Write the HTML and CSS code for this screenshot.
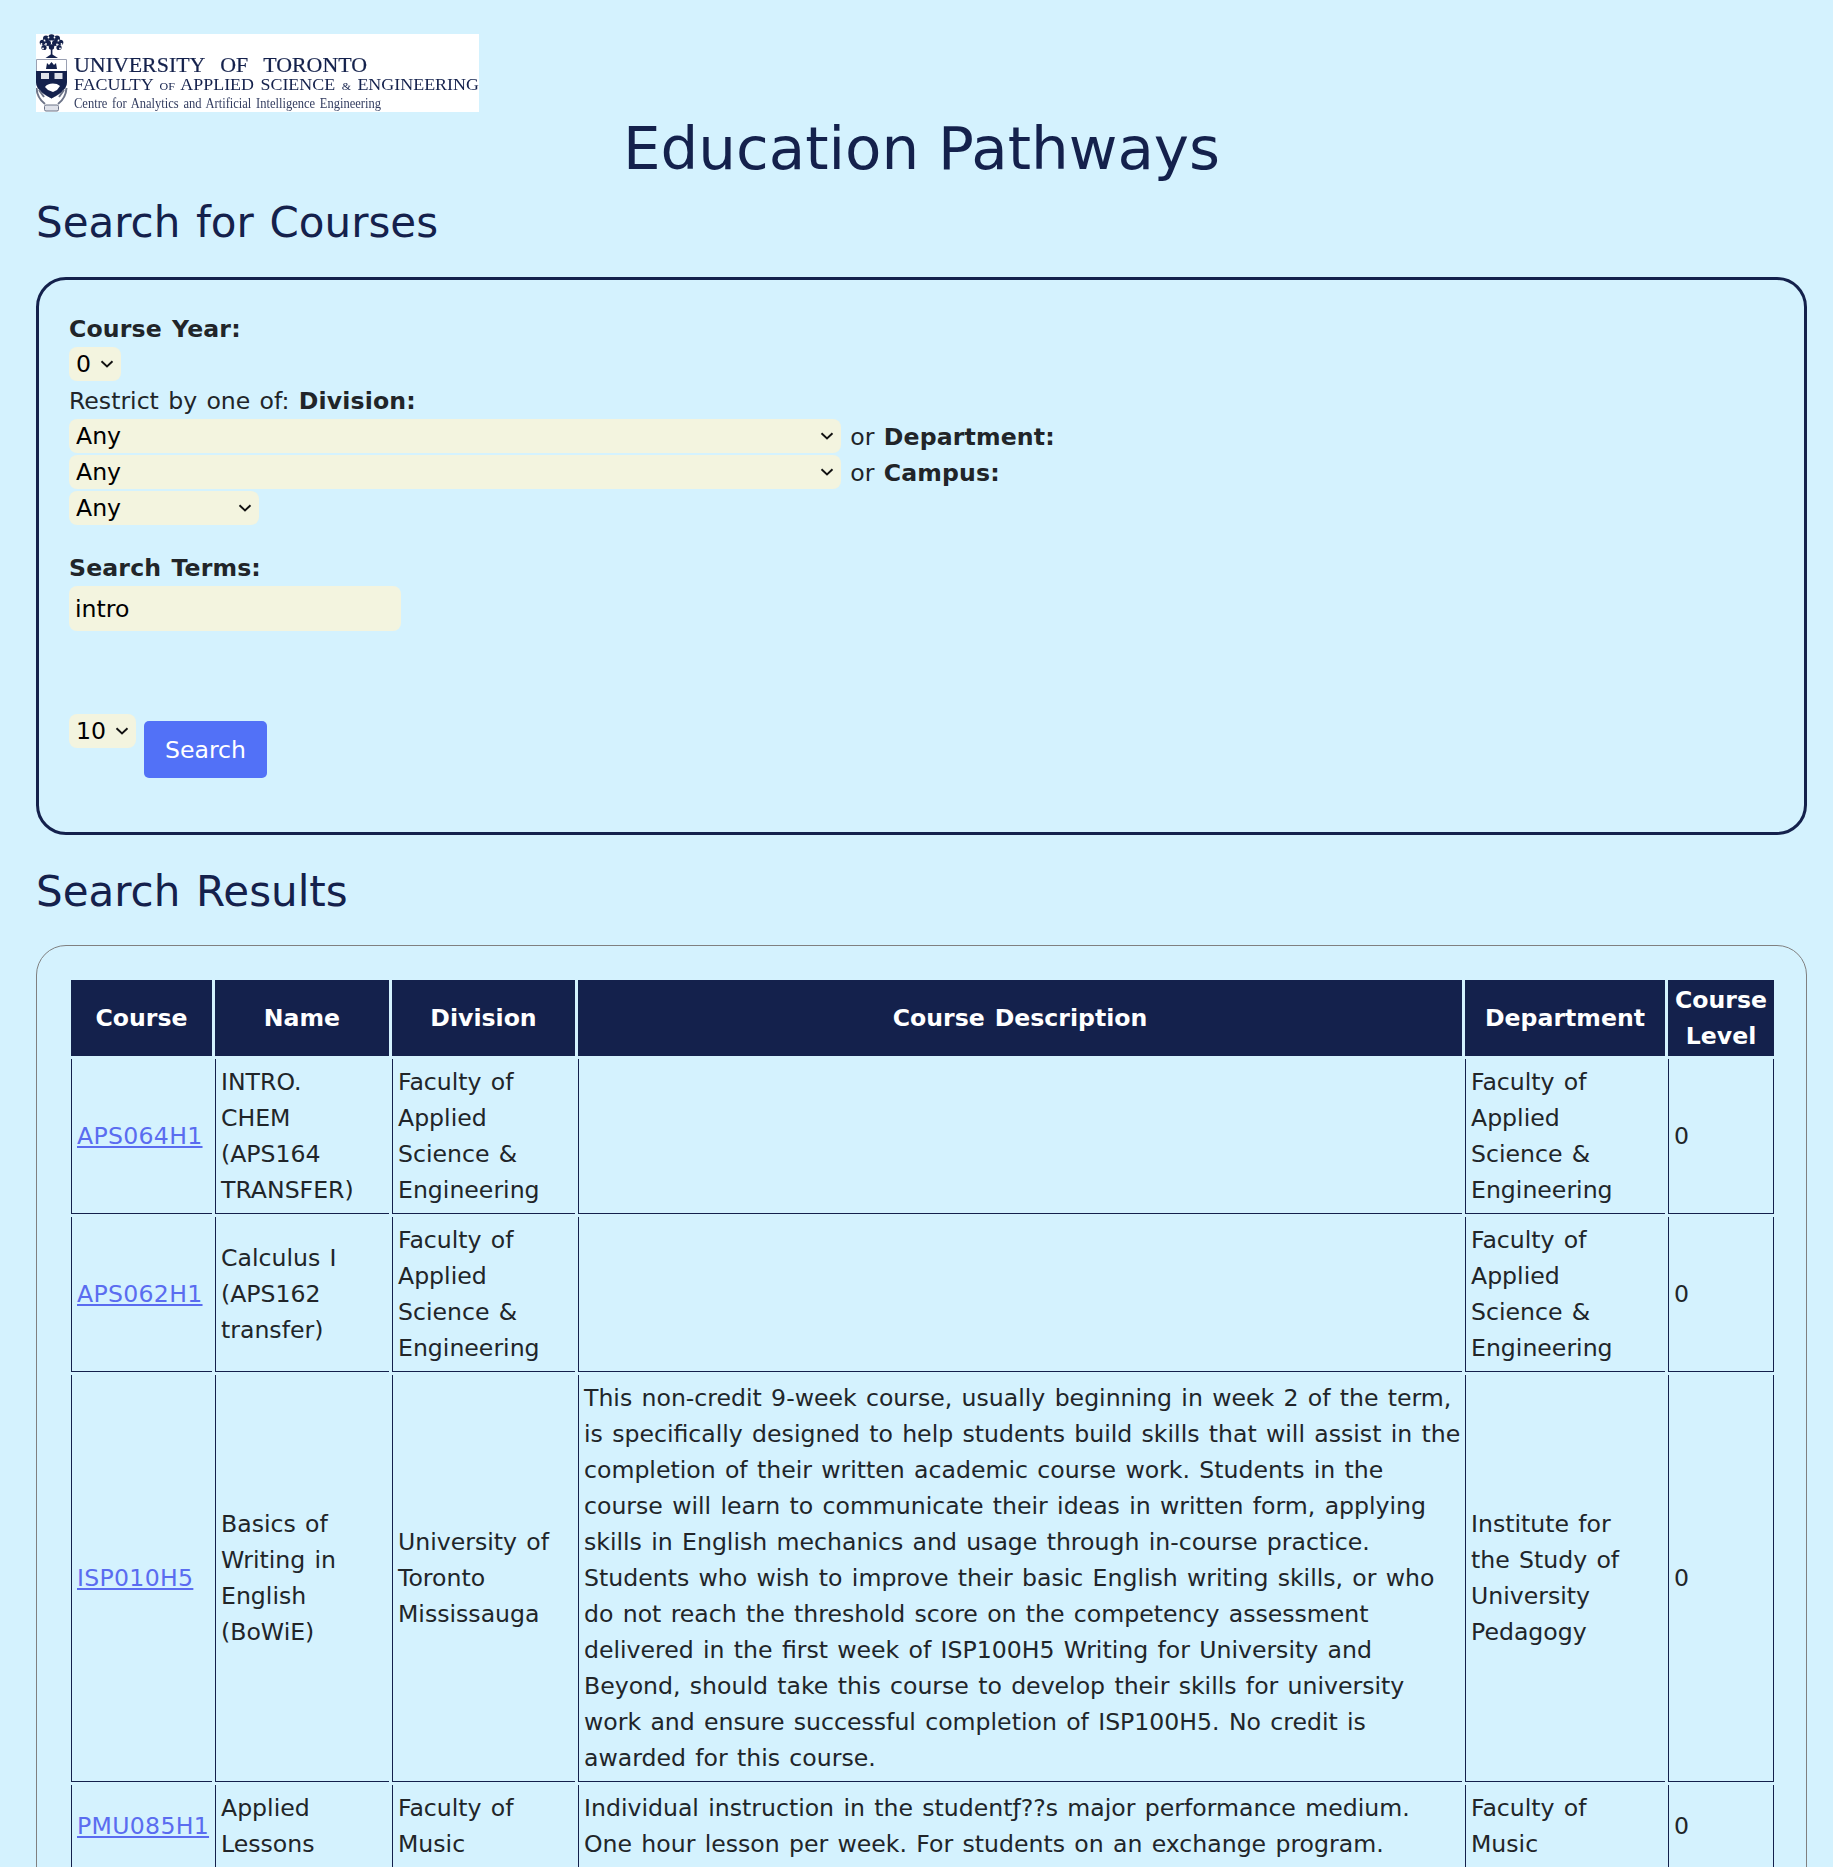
FILE: index.html
```html
<!DOCTYPE html>
<html lang="en">
<head>
<meta charset="UTF-8" />
<meta name="viewport" content="width=device-width, initial-scale=1" />
<title>Education Pathways</title>
<link rel="stylesheet" href="styles.css">
</head>
<body>

<div class="logo">
  <svg width="443" height="78" viewBox="0 0 443 78">
    <rect width="443" height="78" fill="#fff"/>
    <g class="logo-ink">
      <!-- tree -->
      <g fill="#14214c">
        <circle cx="15.5" cy="3.5" r="3.2"/>
        <circle cx="10" cy="4.5" r="3"/>
        <circle cx="21" cy="4.5" r="3"/>
        <circle cx="6.5" cy="8.5" r="2.8"/>
        <circle cx="24.5" cy="8.5" r="2.8"/>
        <circle cx="12" cy="9" r="3"/>
        <circle cx="19" cy="9" r="3"/>
        <circle cx="8" cy="13.5" r="2.6"/>
        <circle cx="23" cy="13.5" r="2.6"/>
        <circle cx="15.5" cy="13" r="2.8"/>
        <rect x="14.8" y="14" width="1.6" height="8"/>
        <path d="M9.5 24 L15.5 20 L22 24 Z"/>
      </g>
      <g fill="#fff">
        <circle cx="12.5" cy="3.5" r=".9"/>
        <circle cx="18.5" cy="3.5" r=".9"/>
        <circle cx="8.5" cy="6.5" r=".9"/>
        <circle cx="22.5" cy="6.5" r=".9"/>
        <circle cx="5.5" cy="10" r=".9"/>
        <circle cx="25.5" cy="10" r=".9"/>
        <circle cx="10" cy="10" r=".9"/>
        <circle cx="15.5" cy="7.5" r=".9"/>
        <circle cx="21" cy="10.5" r=".9"/>
        <circle cx="12" cy="14" r=".9"/>
        <circle cx="19" cy="14" r=".9"/>
        <circle cx="7" cy="14.5" r=".9"/>
        <circle cx="24" cy="14.5" r=".9"/>
      </g>
      <!-- shield -->
      <path d="M.5 25.5 H30.5 V48 C30.5 56 22 61 15.5 64 C9 61 .5 56 .5 48 Z" fill="#fff" stroke="#9aa0b2" stroke-width="1"/>
      <path d="M11 29 l2 2 l2.5 -3 l2.5 3 l2 -2 l1 6 h-11 z" fill="#14214c"/>
      <path d="M0 37 H31 V48 C31 56 22 61 15.5 64.5 C9 61 0 56 0 48 Z" fill="#14214c"/>
      <rect x="5" y="39" width="8" height="6" fill="#dfe2ea"/>
      <rect x="18.5" y="39" width="8" height="6" fill="#dfe2ea"/>
      <path d="M9 53 C11 49 20 48 24 52 L21 56 L17 58 L12 56 Z" fill="#fff"/>
      <!-- wreath and motto -->
      <path d="M.5 54 C1 62 5 67 9 70 M30.5 54 C30 62 26 67 22 70 M3 56 L8 63 M28 56 L23 63" fill="none" stroke="#6d7488" stroke-width="2"/>
      <rect x="8.5" y="71" width="14" height="6" rx="1.5" fill="#dfe2ea" stroke="#6d7488" stroke-width="1"/>
      <!-- wordmark -->
      <g fill="#14214c" font-family="'Liberation Serif', serif">
        <text x="38" y="38" font-size="20" stroke="#14214c" stroke-width=".2" textLength="293" lengthAdjust="spacingAndGlyphs">UNIVERSITY&#160;&#160;OF&#160;&#160;TORONTO</text>
        <text x="38" y="56" font-size="16.5" textLength="405" lengthAdjust="spacingAndGlyphs">FACULTY <tspan font-size="11">OF</tspan> APPLIED SCIENCE <tspan font-size="11">&amp;</tspan> ENGINEERING</text>
        <text x="38" y="74" font-size="14" fill="#333d60" textLength="307" lengthAdjust="spacingAndGlyphs">Centre for Analytics and Artificial Intelligence Engineering</text>
      </g>
    </g>
  </svg>
</div>

<h1 class="title">Education Pathways</h1>

<h2 class="section-title">Search for Courses</h2>

<form class="search-box">
  <div class="field-label"><strong>Course Year:</strong></div>
  <div class="select-row"><select class="pick pick-year"><option>0</option></select></div>
  <div class="field-label">Restrict by one of: <strong>Division:</strong></div>
  <div class="select-row"><select class="pick pick-wide"><option>Any</option></select> or <strong>Department:</strong></div>
  <div class="select-row"><select class="pick pick-wide"><option>Any</option></select> or <strong>Campus:</strong></div>
  <div class="select-row"><select class="pick pick-campus"><option>Any</option></select></div>
  <div class="field-label terms-label"><strong>Search Terms:</strong></div>
  <input class="terms" type="text" value="intro" />
  <div class="submit-row">
    <select class="pick pick-count"><option>10</option></select>
    <button type="button" class="search-btn">Search</button>
  </div>
</form>

<h2 class="section-title results-title">Search Results</h2>

<div class="results-box">
  <table class="results">
    <colgroup>
      <col class="col-course"><col class="col-name"><col class="col-div">
      <col class="col-desc"><col class="col-dept"><col class="col-level">
    </colgroup>
    <thead>
      <tr>
        <th>Course</th><th>Name</th><th>Division</th>
        <th>Course Description</th><th>Department</th><th>Course Level</th>
      </tr>
    </thead>
    <tbody>
      <tr>
        <td><a href="#">APS064H1</a></td>
        <td>INTRO.<br>CHEM<br>(APS164<br>TRANSFER)</td>
        <td>Faculty of Applied Science &amp; Engineering</td>
        <td></td>
        <td>Faculty of<br>Applied<br>Science &amp;<br>Engineering</td>
        <td>0</td>
      </tr>
      <tr>
        <td><a href="#">APS062H1</a></td>
        <td>Calculus I (APS162 transfer)</td>
        <td>Faculty of Applied Science &amp; Engineering</td>
        <td></td>
        <td>Faculty of<br>Applied<br>Science &amp;<br>Engineering</td>
        <td>0</td>
      </tr>
      <tr>
        <td><a href="#">ISP010H5</a></td>
        <td>Basics of Writing in English (BoWiE)</td>
        <td>University of Toronto Mississauga</td>
        <td class="desc">This non-credit 9-week course, usually beginning in week 2 of the term,<br>is specifically designed to help students build skills that will assist in the<br>completion of their written academic course work. Students in the<br>course will learn to communicate their ideas in written form, applying<br>skills in English mechanics and usage through in-course practice.<br>Students who wish to improve their basic English writing skills, or who<br>do not reach the threshold score on the competency assessment<br>delivered in the first week of ISP100H5 Writing for University and<br>Beyond, should take this course to develop their skills for university<br>work and ensure successful completion of ISP100H5. No credit is<br>awarded for this course.</td>
        <td>Institute for<br>the Study of<br>University<br>Pedagogy</td>
        <td>0</td>
      </tr>
      <tr>
        <td><a href="#">PMU085H1</a></td>
        <td>Applied Lessons</td>
        <td>Faculty of Music</td>
        <td class="desc">Individual instruction in the studentƒ??s major performance medium.<br>One hour lesson per week. For students on an exchange program.</td>
        <td>Faculty of<br>Music</td>
        <td>0</td>
      </tr>
    </tbody>
  </table>
</div>

</body>
</html>
```

FILE: styles.css
```css
html, body {
  height: 100vh;
  overflow: hidden;
}
body {
  margin: 0;
  padding: 34px 26px 0 36px;
  background: #d4f2fe;
  font-family: "DejaVu Sans", sans-serif;
  font-size: 23.6px;
  line-height: 36px;
  word-spacing: 1.8px;
  color: #212529;
}
strong {
  letter-spacing: 0.15px;
}
.logo {
  height: 78px;
}
.logo svg {
  display: block;
}
.logo-ink {
  filter: blur(0.35px);
}
.title {
  margin: 1px 0 0;
  text-align: center;
  font-weight: 400;
  font-size: 59.5px;
  line-height: 72px;
  word-spacing: 0;
  color: #14214c;
}
.section-title {
  margin: 13px 0 29px;
  font-weight: 400;
  font-size: 42px;
  line-height: 50px;
  word-spacing: 2.4px;
  color: #14214c;
}
.results-title {
  margin: 32px 0 28px;
}
.search-box {
  box-sizing: border-box;
  height: 558px;
  padding: 31px 30px;
  border: 3px solid #14214c;
  border-radius: 30px;
}
.field-label {
  height: 36px;
}
.select-row {
  height: 36px;
}
.pick {
  appearance: none;
  box-sizing: border-box;
  height: 34px;
  padding: 0 0 0 7px;
  border: 0;
  border-radius: 8px;
  background: #f3f4df url("data:image/svg+xml,%3Csvg xmlns='http://www.w3.org/2000/svg' width='14' height='8' viewBox='0 0 14 8'%3E%3Cpath d='M1.5 1.2 L7 6.5 L12.5 1.2' fill='none' stroke='%23111' stroke-width='1.9'/%3E%3C/svg%3E") no-repeat right 7px center;
  font-family: inherit;
  font-size: 23.6px;
  color: #000;
  vertical-align: top;
}
.pick-year { width: 52px; }
.pick-wide { width: 772px; }
.pick-campus { width: 190px; }
.pick-count { width: 67px; }
.terms-label {
  margin-top: 23px;
}
.terms {
  display: block;
  box-sizing: border-box;
  width: 332px;
  height: 45px;
  padding: 0 6px;
  border: 0;
  border-radius: 8px;
  background: #f3f4df;
  font-family: inherit;
  font-size: 23.6px;
  color: #000;
}
.submit-row {
  display: flex;
  align-items: flex-start;
  gap: 8px;
  margin-top: 83px;
}
.search-btn {
  width: 123px;
  height: 57px;
  margin-top: 7px;
  border: 0;
  border-radius: 5px;
  background: #5271f7;
  font-family: inherit;
  font-size: 23.6px;
  color: #fff;
}
.results-box {
  box-sizing: border-box;
  height: 1200px;
  padding: 33px;
  border: 1px solid #808080;
  border-radius: 30px;
}
.results {
  table-layout: fixed;
  width: 1709px;
  border-collapse: separate;
  border-spacing: 3px;
  margin: -2px 0 0 -2px;
}
.col-course { width: 141px; }
.col-name { width: 174px; }
.col-div { width: 183px; }
.col-desc { width: 884px; }
.col-dept { width: 200px; }
.col-level { width: 106px; }
.results th {
  height: 76px;
  padding: 0 4px;
  background: #14214c;
  color: #fff;
  font-weight: 700;
  line-height: 36px;
  box-sizing: border-box;
}
.results td {
  padding: 5px;
  border-left: 1px solid #14214c;
  border-bottom: 1px solid #14214c;
  vertical-align: middle;
}
.results td:last-child {
  border-right: 1px solid #14214c;
}
.results .desc {
  white-space: nowrap;
}
.results a {
  color: #5a6cf0;
  letter-spacing: 0.3px;
}
```
